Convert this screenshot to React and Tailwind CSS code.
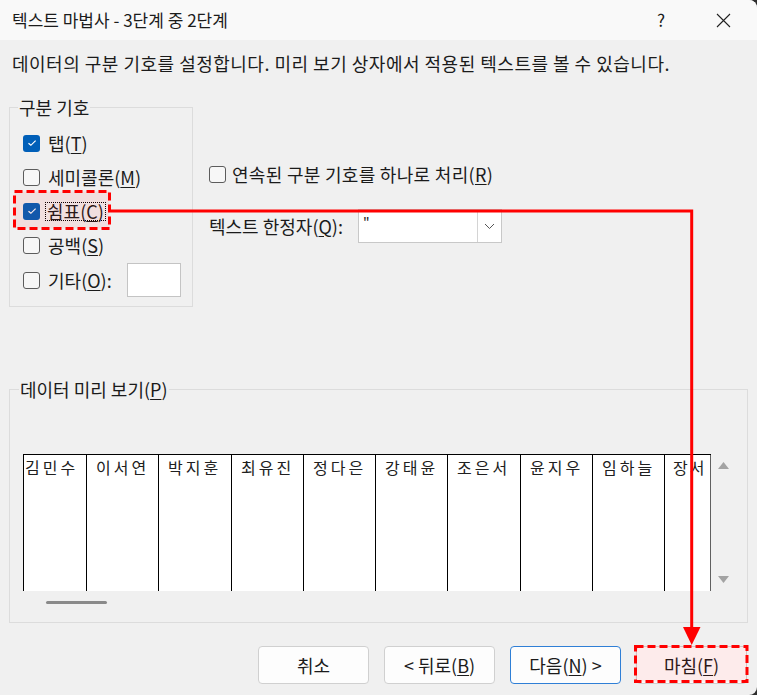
import React from 'react';

const Check = ({ checked }) => (
    <span
        className={
            checked
                ? 'w-[17px] h-[17px] shrink-0 rounded-[3px] bg-[#005fb8] flex items-center justify-center'
                : 'w-[17px] h-[17px] shrink-0 rounded-[3px] border border-[#5c5c5c] bg-[#f7f7f7]'
        }
    >
        {checked && (
            <svg width="10" height="8" viewBox="0 0 10 8">
                <path d="M1.5 4.2 L3.9 6.3 L8.6 1.6" stroke="white" strokeWidth="1.2" fill="none" />
            </svg>
        )}
    </span>
);

// accelerator key, underlined like a Windows dialog
const Acc = ({ k }) => (
    <span>
        (<u className="underline-offset-2">{k}</u>)
    </span>
);

const names = ['김민수', '이서연', '박지훈', '최유진', '정다은', '강태윤', '조은서', '윤지우', '임하늘'];
const widths = ['w-[72px]', 'w-[73px]', 'w-[72px]', 'w-[72px]', 'w-[72px]', 'w-[73px]', 'w-[72px]', 'w-[72px]'];

export default function App() {
    return (
        <div className="w-[757px] h-[695px] bg-[#2e2e2e]">
            <div className="relative w-full h-full bg-[#f0f0f0] rounded-tr-[8px] rounded-br-[8px] overflow-hidden font-['Noto_Sans_CJK_KR',sans-serif] text-[#1b1b1b]">
                {/* title bar */}
                <div className="h-[40px] bg-[#f9f9f9] flex items-center pl-[12px]">
                    <span className="text-[17px] leading-[20px]">텍스트 마법사 - 3단계 중 2단계</span>
                    <span className="ml-auto text-[17px] leading-[20px] w-[20px] text-center">?</span>
                    <span className="ml-[45px] mr-[26px] flex items-center">
                        <svg width="15" height="15" viewBox="0 0 15 15">
                            <path d="M1 1 L14 14 M14 1 L1 14" stroke="#222" strokeWidth="1.1" />
                        </svg>
                    </span>
                </div>

                <p className="mt-[12px] pl-[12px] text-[18px] leading-[22px] tracking-[0.5px]">
                    데이터의 구분 기호를 설정합니다. 미리 보기 상자에서 적용된 텍스트를 볼 수 있습니다.
                </p>

                <div className="flex mt-[23px] pl-[9px]">
                    <fieldset className="w-[184px] h-[210px] border border-[#dcdcdc] pl-[8px]">
                        <legend className="text-[18px] leading-[20px] px-[1px]">구분 기호</legend>
                        <div className="ml-[5px] pt-[9px] text-[18px] leading-[20px]">
                            <label className="h-[34px] flex items-center gap-[8px]">
                                <Check checked />
                                <span>탭<Acc k="T" /></span>
                            </label>
                            <label className="h-[34px] flex items-center gap-[8px]">
                                <Check />
                                <span>세미콜론<Acc k="M" /></span>
                            </label>
                            <label className="h-[34px] flex items-center gap-[5px]">
                                <Check checked />
                                <span className="border border-dotted border-black px-[1px] leading-[17px]">
                                    쉼표<Acc k="C" />
                                </span>
                            </label>
                            <label className="h-[34px] flex items-center gap-[8px]">
                                <Check />
                                <span>공백<Acc k="S" /></span>
                            </label>
                            <label className="h-[36px] flex items-center gap-[8px]">
                                <Check />
                                <span className="w-[71px] shrink-0">기타<Acc k="O" />:</span>
                                <span className="w-[54px] h-[34px] bg-white border border-[#c4c4c4]" />
                            </label>
                        </div>
                    </fieldset>

                    <div className="ml-[16px] text-[18px] leading-[22px]">
                        <label className="mt-[66px] flex items-center gap-[6px]">
                            <Check />
                            <span className="tracking-[0.3px]">연속된 구분 기호를 하나로 처리<Acc k="R" /></span>
                        </label>
                        <div className="mt-[24px] flex items-center">
                            <span className="w-[149px] shrink-0">텍스트 한정자<Acc k="Q" />:</span>
                            <div className="w-[144px] h-[34px] bg-white border border-[#c8c8c8] flex">
                                <span className="flex-1 pl-[4px] pt-[4px] text-[14px] leading-[16px]">"</span>
                                <span className="w-[24px] border-l border-[#d4d4d4] flex items-center justify-center">
                                    <svg width="11" height="7" viewBox="0 0 11 7">
                                        <path d="M1 1 L5.5 5.5 L10 1" stroke="#555" strokeWidth="1" fill="none" />
                                    </svg>
                                </span>
                            </div>
                        </div>
                    </div>
                </div>

                {/* data preview */}
                <fieldset className="ml-[9px] mt-[72px] w-[739px] h-[244px] border border-[#dcdcdc] pl-[9px]">
                    <legend className="text-[18px] leading-[20px] px-[1px]">
                        데이터 미리 보기<Acc k="P" />
                    </legend>
                    <div className="ml-[4px] pt-[55px]">
                        <div className="flex">
                            <div className="w-[688px] h-[137px] bg-white border-t border-black flex overflow-hidden text-[16px] leading-[20px] tracking-[3px] text-[#202020]">
                                <div className="w-[63px] shrink-0 border-l border-black pl-[1px] pt-[2px]">{names[0]}</div>
                                {names.slice(1).map((n, i) => (
                                    <div key={n} className={`${widths[i]} shrink-0 border-l border-black pl-[9px] pt-[2px] whitespace-nowrap`}>
                                        {n}
                                    </div>
                                ))}
                                <div className="flex-1 border-l border-r border-l-black border-r-[#606060] pl-[8px] pt-[2px] tracking-[2px] whitespace-nowrap">
                                    장서
                                </div>
                            </div>
                            <div className="w-[25px] flex flex-col items-center justify-between pt-[8px] pb-[8px]">
                                <svg width="11" height="7" viewBox="0 0 11 7">
                                    <path d="M5.5 0 L11 7 L0 7 Z" fill="#a3a3a3" />
                                </svg>
                                <svg width="11" height="7" viewBox="0 0 11 7">
                                    <path d="M0 0 L11 0 L5.5 7 Z" fill="#a3a3a3" />
                                </svg>
                            </div>
                        </div>
                        <div className="mt-[10px] ml-[23px] w-[61px] h-[3px] rounded-full bg-[#8a8a8a]" />
                    </div>
                </fieldset>

                {/* buttons */}
                <div className="mt-[23px] pr-[10px] flex justify-end gap-[15px] text-[18px] leading-[20px]">
                    <button className="w-[111px] h-[38px] rounded-[4px] border border-[#d0d0d0] bg-[#fdfdfd]">취소</button>
                    <button className="w-[111px] h-[38px] rounded-[4px] border border-[#d0d0d0] bg-[#fdfdfd]">
                        &lt; 뒤로<Acc k="B" />
                    </button>
                    <button className="w-[111px] h-[38px] rounded-[4px] border-[1.5px] border-[#2f7fd6] bg-[#fdfdfd]">
                        다음<Acc k="N" /> &gt;
                    </button>
                    <button className="w-[111px] h-[38px] rounded-[4px] border border-[#d0d0d0] bg-[#fdfdfd]">
                        마침<Acc k="F" />
                    </button>
                </div>

                {/* red annotation overlay */}
                <svg className="absolute left-0 top-0 pointer-events-none" width="757" height="695">
                    <rect x="14.5" y="191.5" width="95" height="37" fill="rgba(255,0,0,0.07)" stroke="#ff0000" strokeWidth="3" strokeDasharray="8 4" />
                    <path d="M111 211 L691.7 211 L691.7 628" stroke="#ff0000" strokeWidth="3" fill="none" />
                    <path d="M683 627 L700.5 627 L691.7 645 Z" fill="#ff0000" />
                    <rect x="635.5" y="646.5" width="111.5" height="35" fill="rgba(255,0,0,0.07)" stroke="#ff0000" strokeWidth="3" strokeDasharray="8 4" />
                </svg>
            </div>
        </div>
    );
}
